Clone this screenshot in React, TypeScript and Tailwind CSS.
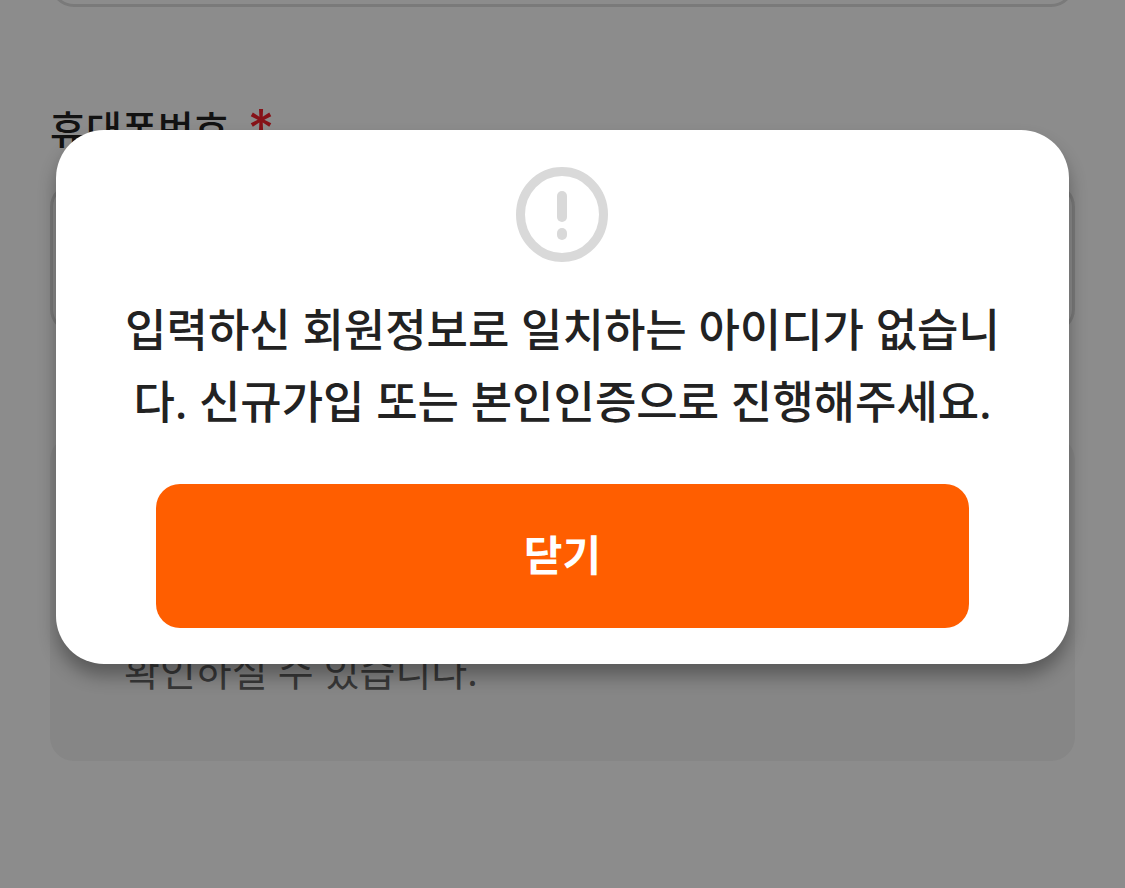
interface FieldProps {
  id: string;
  label: string;
  type?: string;
}

function Field({ id, label, type = "text" }: FieldProps) {
  return (
    <div>
      <label htmlFor={id} className="flex h-[60px] gap-[18px] text-[39px] leading-[60px] font-medium text-[#222]">
        {label}
        <span className="font-['Inter'] text-[52px] leading-[60px] font-medium text-[#f5222d]">*</span>
      </label>
      <input
        id={id}
        type={type}
        className="mt-6 block h-[150px] w-full rounded-3xl border-3 border-[#dedede] bg-white px-9 text-[39px]"
      />
    </div>
  );
}

function AlertIcon() {
  return (
    <svg width="93" height="96" viewBox="0 0 93 96" fill="none" aria-hidden="true">
      <ellipse cx="46" cy="48.5" rx="41.5" ry="43" stroke="#d9d9d9" strokeWidth="9" />
      <rect x="41" y="25" width="10" height="31" rx="5" fill="#d9d9d9" />
      <rect x="41" y="62" width="10" height="12" rx="5" fill="#d9d9d9" />
    </svg>
  );
}

function AlertDialog() {
  return (
    <div className="absolute inset-0 bg-black/45 pt-[130px]">
      <section
        role="alertdialog"
        aria-modal="true"
        aria-describedby="alert-message"
        className="mx-auto flex w-[90%] flex-col items-center rounded-[48px] bg-white px-[60px] py-9 shadow-[0_12px_18px_rgba(0,0,0,0.33)]"
      >
        <AlertIcon />
        <p
          id="alert-message"
          className="mt-8 text-center text-[45px] leading-[72px] font-medium break-all text-[#222]"
        >
          입력하신 회원정보로 일치하는 아이디가 없습니다. 신규가입 또는 본인인증으로 진행해주세요.
        </p>
        <div className="mt-[46px] w-full px-10">
          <button
            type="button"
            className="h-36 w-full rounded-3xl bg-[#ff5e00] pb-1 text-[42px] font-bold text-white"
          >
            닫기
          </button>
        </div>
      </section>
    </div>
  );
}

export default function App() {
  return (
    <div className="relative min-h-screen overflow-hidden bg-white font-['Noto_Sans','Noto_Sans_CJK_KR',sans-serif]">
      <main className="px-[50px]">
        <input
          type="text"
          aria-label="이름"
          className="-mt-[143px] block h-[150px] w-full rounded-3xl border-3 border-[#dedede] bg-white px-9 text-[39px]"
        />
        <div className="mt-[92px]">
          <Field id="phone" label="휴대폰번호" type="tel" />
        </div>
        <div className="mt-[103px] flex h-[325px] items-end rounded-3xl bg-[#f4f4f4] px-[74px] pb-[60px]">
          <p className="text-[39px] leading-[60px] text-[#666]">확인하실 수 있습니다.</p>
        </div>
      </main>
      <AlertDialog />
    </div>
  );
}
